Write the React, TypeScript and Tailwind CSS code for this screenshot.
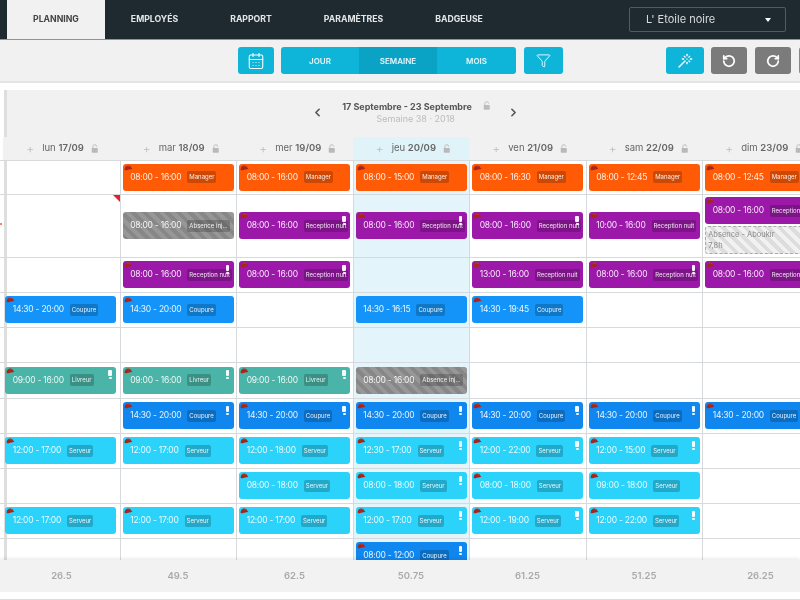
import React from "react";
import { CalendarDays, ChevronLeft, ChevronRight, Funnel, RotateCcw, RotateCw, Wand } from "lucide-react";

type Kind = "orange" | "purple" | "blue" | "teal" | "dark" | "cyan" | "gray";
type Shift = { t: string; l: string; k: Kind; hat?: boolean; warn?: boolean };

const kindClass: Record<Kind, string> = {
  orange: "bg-[#ff5a05]",
  purple: "bg-[#9b18a9]",
  blue: "bg-[#1494f8]",
  teal: "bg-[#49b4a7]",
  dark: "bg-[#1087ef]",
  cyan: "bg-[#2bd3fb]",
  gray: "bg-[repeating-linear-gradient(45deg,#878787_0,#878787_4px,#979797_4px,#979797_8px)]",
};

const S = (t: string, l: string, k: Kind, warn = false, hat = true): Shift => ({ t, l, k, warn, hat });
const R = "Reception nuit";
const A = "Absence inj...";

const rows: { h: string; cells: (Shift | null | "double" | "flag")[] }[] = [
  {
    h: "h-[34px]",
    cells: [null, S("08:00 - 16:00", "Manager", "orange"), S("08:00 - 16:00", "Manager", "orange"), S("08:00 - 15:00", "Manager", "orange"), S("08:00 - 16:30", "Manager", "orange"), S("08:00 - 12:45", "Manager", "orange"), S("08:00 - 12:45", "Manager", "orange")],
  },
  {
    h: "h-[63px]",
    cells: ["flag", S("08:00 - 16:00", A, "gray", false, false), S("08:00 - 16:00", R, "purple", true), S("08:00 - 16:00", R, "purple", true), S("08:00 - 16:00", R, "purple", true), S("10:00 - 16:00", R, "purple"), "double"],
  },
  {
    h: "h-[35px]",
    cells: [null, S("08:00 - 16:00", R, "purple", true), S("08:00 - 16:00", R, "purple", true), null, S("13:00 - 16:00", R, "purple"), S("08:00 - 16:00", R, "purple", true), S("08:00 - 16:00", R, "purple")],
  },
  {
    h: "h-[35px]",
    cells: [S("14:30 - 20:00", "Coupure", "blue"), S("14:30 - 20:00", "Coupure", "blue"), null, S("14:30 - 16:15", "Coupure", "blue", false, false), S("14:30 - 19:45", "Coupure", "blue"), null, null],
  },
  { h: "h-[35px]", cells: [null, null, null, null, null, null, null] },
  {
    h: "h-[36px]",
    cells: [S("09:00 - 16:00", "Livreur", "teal", true), S("09:00 - 16:00", "Livreur", "teal", true), S("09:00 - 16:00", "Livreur", "teal", true), S("08:00 - 16:00", A, "gray", false, false), null, null, null],
  },
  {
    h: "h-[35px]",
    cells: [null, S("14:30 - 20:00", "Coupure", "dark", true), S("14:30 - 20:00", "Coupure", "dark", true), S("14:30 - 20:00", "Coupure", "dark", true), S("14:30 - 20:00", "Coupure", "dark", true), S("14:30 - 20:00", "Coupure", "dark", true), S("14:30 - 20:00", "Coupure", "dark")],
  },
  {
    h: "h-[35px]",
    cells: [S("12:00 - 17:00", "Serveur", "cyan"), S("12:00 - 17:00", "Serveur", "cyan"), S("12:00 - 18:00", "Serveur", "cyan"), S("12:30 - 17:00", "Serveur", "cyan", true), S("12:00 - 22:00", "Serveur", "cyan", true), S("12:00 - 15:00", "Serveur", "cyan", true), null],
  },
  {
    h: "h-[35px]",
    cells: [null, null, S("08:00 - 18:00", "Serveur", "cyan"), S("08:00 - 18:00", "Serveur", "cyan", true), S("08:00 - 18:00", "Serveur", "cyan"), S("09:00 - 18:00", "Serveur", "cyan"), null],
  },
  {
    h: "h-[35px]",
    cells: [S("12:00 - 17:00", "Serveur", "cyan"), S("12:00 - 17:00", "Serveur", "cyan"), S("12:00 - 17:00", "Serveur", "cyan"), S("12:00 - 17:00", "Serveur", "cyan", true), S("12:00 - 19:00", "Serveur", "cyan", true), S("12:00 - 22:00", "Serveur", "cyan", true), null],
  },
  {
    h: "h-[35px]",
    cells: [null, null, null, S("08:00 - 12:00", "Coupure", "dark", true), null, null, null],
  },
];

const days = [
  ["lun", "17/09"],
  ["mar", "18/09"],
  ["mer", "19/09"],
  ["jeu", "20/09"],
  ["ven", "21/09"],
  ["sam", "22/09"],
  ["dim", "23/09"],
];
const totals = ["26.5", "49.5", "62.5", "50.75", "61.25", "51.25", "26.25"];

function LockIcon({ className }: { className?: string }) {
  return (
    <svg viewBox="0 0 10 12" className={className} fill="none">
      <path d="M2.5 5.5V3.4a2.5 2.5 0 0 1 5 0" stroke="currentColor" strokeWidth="1.2" />
      <rect x="1" y="5.2" width="8" height="6.3" rx="0.8" fill="currentColor" />
    </svg>
  );
}

function Hat() {
  return (
    <svg viewBox="0 0 10 7" className="absolute left-[1px] top-[1px] h-[6px] w-[9px]">
      <path d="M0.4 5.2C0.6 2.4 2.4 0.6 4.9 0.6c2 0 3.2 1.3 3.6 2.9l1.2 0.9-2.2 0.5C5.4 5 3.2 6.4 1.5 6.2 0.8 6.1 0.4 5.8 0.4 5.2z" fill="#a8251b" />
      <path d="M3 1.3c1.4-.5 3-.1 3.8 1.2" stroke="#d65545" strokeWidth="0.6" fill="none" />
    </svg>
  );
}

function Card({ s }: { s: Shift }) {
  return (
    <div className={`relative flex h-[27px] w-[111px] shrink-0 items-center rounded-[3px] pl-[7.5px] ${kindClass[s.k]}`}>
      {s.hat && <Hat />}
      <span className="whitespace-nowrap text-[8.5px] leading-none tracking-[-0.25px] text-white/90">{s.t}</span>
      <span className="ml-[6px] whitespace-nowrap rounded-[2px] bg-black/20 px-[2px] py-[3px] text-[6px] leading-[6px] text-white/90">
        {s.l}
      </span>
      {s.warn && (
        <span className="absolute right-[4.5px] top-[3.5px] flex w-[3px] flex-col items-center gap-[1px]">
          <span className="h-[6px] w-[3.5px] rounded-[1px] bg-white/95" />
          <span className="h-[2px] w-[3px] rounded-[1px] bg-white/95" />
        </span>
      )}
    </div>
  );
}

function Cell({ v, col }: { v: Shift | null | "double" | "flag"; col: number }) {
  const bg = col === 3 ? "bg-[#e3f5fa]" : "";
  return (
    <div className={`relative flex flex-col justify-center pb-[1px] pl-[2px] ${col === 0 ? "" : "border-l border-[#d6dadc]"} ${bg}`}>
      {v === "flag" && (
        <span className="absolute right-0 top-0 h-0 w-0 border-l-[7px] border-t-[7px] border-l-transparent border-t-[#e8202c]" />
      )}
      {v === "double" && (
        <div className="flex flex-col gap-[2px]">
          <Card s={S("08:00 - 16:00", R, "purple")} />
          <div className="h-[28px] w-[111px] rounded-[3px] border border-dashed border-[#a9a9a9] bg-[repeating-linear-gradient(45deg,#f1f1f1_0,#f1f1f1_4px,#dddddd_4px,#dddddd_8px)] pl-[2px] pt-[2px] text-[7.5px] leading-[11px] text-[#8a8a8a]">
            <div>Absence - Aboukir</div>
            <div>7,8h</div>
          </div>
        </div>
      )}
      {v && v !== "flag" && v !== "double" && <Card s={v} />}
    </div>
  );
}

const iconBtn = "flex h-[27px] shrink-0 items-center justify-center rounded-[3px]";

export default function App() {
  return (
    <div className="flex h-[600px] w-[800px] flex-col overflow-hidden bg-white font-['Inter',sans-serif] blur-[0.35px]">
      {/* Top navigation */}
      <header className="flex h-[40px] shrink-0 items-stretch border-b border-[#8d9599] bg-[#1f2a30] pl-[7px] text-[8.7px] font-bold">
        <div className="flex items-center bg-[#f1f1f1] px-[26px] text-[#444]">PLANNING</div>
        {["EMPLOYÉS", "RAPPORT", "PARAMÈTRES", "BADGEUSE"].map((t) => (
          <div key={t} className="flex items-center px-[26px] text-[#e4e7e8]">{t}</div>
        ))}
        <div className="ml-auto mr-[14px] mt-[7px] flex h-[25px] w-[157px] items-center justify-between rounded-[2px] border border-[#1f6f80] pl-[16px] pr-[14px] text-[11px] font-normal text-[#d9dcdd]">
          <span>L' Etoile noire</span>
          <span className="h-0 w-0 border-x-[3.5px] border-t-[4px] border-x-transparent border-t-white" />
        </div>
      </header>

      {/* Toolbar */}
      <div className="flex h-[43px] shrink-0 items-start border-b-2 border-[#e4e4e4] bg-[#f1f1f1] pl-[237.5px] pt-[7px]">
        <div className={`${iconBtn} w-[36px] bg-[#0fb5d9] text-white`}>
          <CalendarDays size={18} strokeWidth={1.4} />
        </div>
        <div className="ml-[7.5px] flex h-[27px] w-[235px] shrink-0 overflow-hidden rounded-[3px] bg-[#0fb5d9] text-[8px] font-semibold text-[#e4f7fb]">
          <div className="flex w-[78px] items-center justify-center">JOUR</div>
          <div className="flex w-[78px] items-center justify-center bg-[#0aa3c5]">SEMAINE</div>
          <div className="flex w-[79px] items-center justify-center">MOIS</div>
        </div>
        <div className={`${iconBtn} ml-[7.5px] w-[39px] bg-[#0fb5d9] text-white`}>
          <Funnel size={15} strokeWidth={1.4} />
        </div>
        <div className={`${iconBtn} ml-[103px] w-[38px] bg-[#0fb5d9] text-white`}>
          <Wand size={16} strokeWidth={2} />
        </div>
        <div className={`${iconBtn} ml-[7.5px] w-[36px] bg-[#7b7b7b] text-white`}>
          <RotateCcw size={14} strokeWidth={3} />
        </div>
        <div className={`${iconBtn} ml-[8px] w-[36px] bg-[#7b7b7b] text-white`}>
          <RotateCw size={14} strokeWidth={3} />
        </div>
        <div className={`${iconBtn} ml-[7.5px] w-[10px] bg-[#0fb5d9]`} />
      </div>

      <div className="h-[7px] shrink-0 bg-white" />

      {/* Main planning */}
      <main className="relative flex min-h-0 flex-1 flex-col">
        <span className="absolute bottom-0 left-[3.5px] top-0 z-0 w-[3px] bg-[#dedede]" />
        <span className="absolute left-0 top-[133px] z-20 h-[1.5px] w-[2px] bg-[#f08a5a]" />

        <div className="relative z-10 ml-[6.5px] flex h-[47px] shrink-0 items-start bg-[#f1f1f1] pl-[304px] text-[#555]">
          <ChevronLeft size={13} strokeWidth={3} className="mt-[16px] shrink-0 text-[#555]" />
          <div className="ml-[17px] w-[133px] shrink-0 pt-[11px] text-center">
            <div className="whitespace-nowrap text-[9px] font-bold leading-[12px] text-[#555]">17 Septembre - 23 Septembre</div>
            <div className="ml-[36px] w-[78px] whitespace-nowrap text-[9px] leading-[12px] text-[#bcbcbc]">Semaine 38 · 2018</div>
          </div>
          <LockIcon className="ml-[9px] mt-[11px] h-[9px] w-[7.5px] shrink-0 text-[#bdbdbd]" />
          <ChevronRight size={13} strokeWidth={3} className="ml-[17px] mt-[16px] shrink-0 text-[#555]" />
        </div>

        <div className="relative z-10 flex h-[23px] shrink-0">
          <div className="w-[3.2px] shrink-0 bg-white" />
          <div className="grid shrink-0 grid-cols-[repeat(7,116.5px)]">
            {days.map(([d, n], i) => (
              <div
                key={d}
                className={`flex w-[116.5px] items-center pl-[23px] text-[9.5px] text-[#666] ${i === 3 ? "bg-[#dff3f8]" : "bg-[#f1f1f1]"}`}
              >
                <span className="w-[16px] shrink-0 text-[12px] font-light leading-none text-[#bbb]">+</span>
                <span className="whitespace-nowrap">
                  {d} <b className="font-semibold">{n}</b>
                </span>
                <LockIcon className="ml-[7px] h-[9px] w-[7.5px] shrink-0 text-[#b9b9b9]" />
              </div>
            ))}
          </div>
        </div>

        <div className="relative z-10 min-h-0 flex-1 overflow-hidden">
          {rows.map((r, i) => (
            <div
              key={i}
              className={`grid grid-cols-[3.2px_repeat(7,116.5px)] border-t border-[#d6dadc] ${r.h}`}
            >
              <div />
              {r.cells.map((c, j) => (
                <Cell key={j} v={c} col={j} />
              ))}
            </div>
          ))}
        </div>

        {/* Totals */}
        <div className="relative z-20 grid h-[32px] shrink-0 grid-cols-[3.2px_repeat(7,116.5px)] items-center bg-[#f2f2f2] text-[9.5px] font-semibold text-[#a9a9a9] shadow-[0_-2px_3px_rgba(0,0,0,0.07)]">
          <div />
          {totals.map((t) => (
            <div key={t} className="text-center">{t}</div>
          ))}
        </div>
        <div className="relative z-20 h-[8px] shrink-0 border-b border-[#dcdcdc] bg-white" />
      </main>
    </div>
  );
}
